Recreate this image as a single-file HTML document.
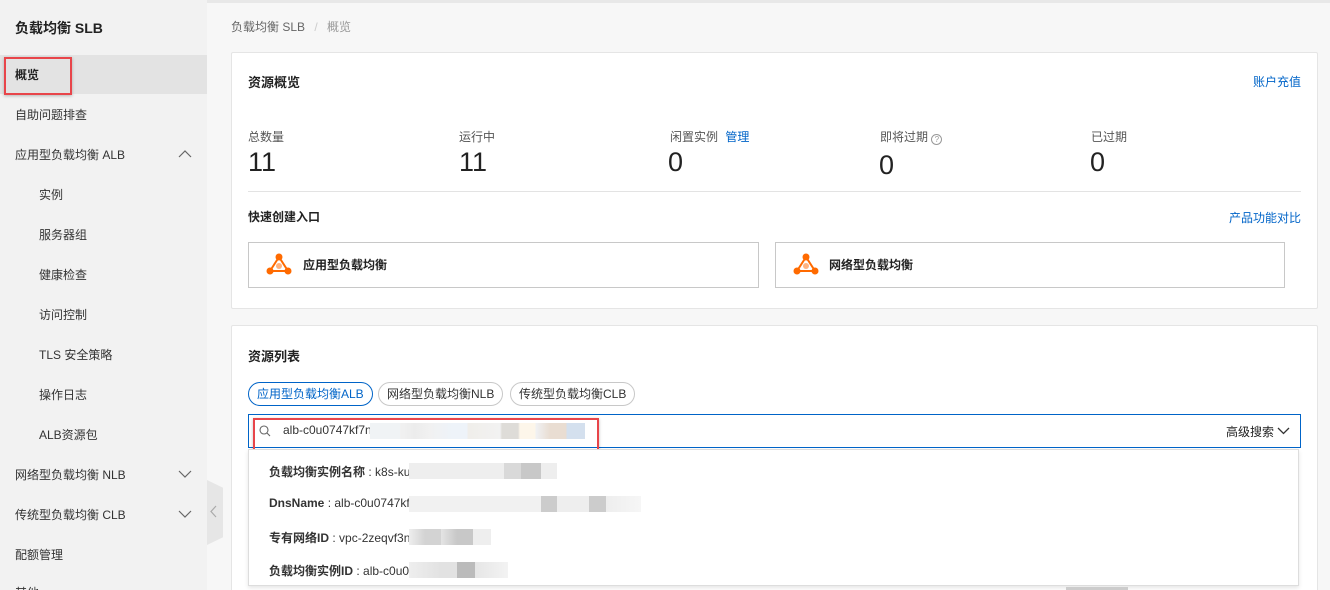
<!DOCTYPE html>
<html style="width:1330px;height:590px;overflow:hidden"><head><meta charset="utf-8"><style>
*{margin:0;padding:0;box-sizing:border-box}
body{width:1330px;height:590px;overflow:hidden;background:#f7f7f7;font-family:"Liberation Sans","Noto Sans CJK SC",sans-serif;color:#333;font-size:12px;position:relative}
.a{position:absolute;white-space:nowrap}
.side{position:absolute;left:0;top:0;width:207px;height:590px;background:#f2f2f2}
.blue{color:#0064c8}
.card{position:absolute;background:#fff;border:1px solid #e5e5e5;border-radius:2px}
.lbl{font-size:12px;color:#555}
.num{font-size:27px;color:#222}
.btn{position:absolute;border:1px solid #c8c8c8;background:#fff;height:46px;top:242px}
.tab{position:absolute;top:382px;height:24px;border:1px solid #c8c8c8;border-radius:12px;font-size:12px;line-height:22px;padding:0 8px;color:#333}
.pix{position:absolute;height:16px}
.it{font-size:12px;color:#333}
.it b{font-weight:bold}
</style></head><body>
<div class="a" style="left:0;top:0;width:1330px;height:3px;background:#e8e8e8"></div>
<div class="side">
<div class="a" style="left:15px;top:18px;font-size:14px;font-weight:bold;color:#222">负载均衡 SLB</div>
<div class="a" style="left:0;top:55px;width:207px;height:39px;background:#e3e3e3"></div>
<div class="a" style="left:4px;top:57px;width:68px;height:38px;border:2px solid #e8454a;box-shadow:0 1px 3px rgba(0,0,0,.25)"></div>
<div class="a" style="left:15px;top:66px;font-weight:bold;color:#222">概览</div>
<div class="a" style="left:15px;top:106px">自助问题排查</div>
<div class="a" style="left:15px;top:146px">应用型负载均衡 ALB</div>
<svg class="a" style="left:178px;top:150px" width="14" height="9"><path d="M1 7L7 1L13 7" fill="none" stroke="#666" stroke-width="1.2"/></svg>
<div class="a" style="left:39px;top:186px">实例</div>
<div class="a" style="left:39px;top:226px">服务器组</div>
<div class="a" style="left:39px;top:266px">健康检查</div>
<div class="a" style="left:39px;top:306px">访问控制</div>
<div class="a" style="left:39px;top:346px">TLS 安全策略</div>
<div class="a" style="left:39px;top:386px">操作日志</div>
<div class="a" style="left:39px;top:426px">ALB资源包</div>
<div class="a" style="left:15px;top:466px">网络型负载均衡 NLB</div>
<svg class="a" style="left:178px;top:470px" width="14" height="9"><path d="M1 1L7 7L13 1" fill="none" stroke="#666" stroke-width="1.2"/></svg>
<div class="a" style="left:15px;top:506px">传统型负载均衡 CLB</div>
<svg class="a" style="left:178px;top:510px" width="14" height="9"><path d="M1 1L7 7L13 1" fill="none" stroke="#666" stroke-width="1.2"/></svg>
<div class="a" style="left:15px;top:546px">配额管理</div>
<div class="a" style="left:15px;top:584px">其他</div>
</div>
<div class="a" style="left:207px;top:480px;width:16px;height:65px;background:#e6e6e6;clip-path:polygon(0 0,100% 12%,100% 88%,0 100%)"></div>
<svg class="a" style="left:210px;top:505px" width="8" height="13"><path d="M6 1L1 6.5L6 12" fill="none" stroke="#aaa" stroke-width="1.2"/></svg>
<div class="a" style="left:231px;top:18px;color:#666">负载均衡 SLB <span style="color:#ccc;margin:0 6px">/</span> <span style="color:#999">概览</span></div>

<div class="card" style="left:231px;top:52px;width:1087px;height:257px"></div>
<div class="a" style="left:248px;top:72px;font-size:13px;font-weight:bold;color:#222">资源概览</div>
<div class="a blue" style="left:1253px;top:73px">账户充值</div>
<div class="a lbl" style="left:248px;top:128px">总数量</div><div class="a num" style="left:248px;top:147px">11</div>
<div class="a lbl" style="left:459px;top:128px">运行中</div><div class="a num" style="left:459px;top:147px">11</div>
<div class="a lbl" style="left:670px;top:128px">闲置实例 <span class="blue" style="margin-left:4px">管理</span></div><div class="a num" style="left:668px;top:147px">0</div>
<div class="a lbl" style="left:880px;top:128px">即将过期 <span style="display:inline-block;width:11px;height:11px;border:1px solid #999;border-radius:50%;font-size:8px;line-height:9px;text-align:center;color:#999;vertical-align:-1px">?</span></div><div class="a num" style="left:879px;top:150px">0</div>
<div class="a lbl" style="left:1091px;top:128px">已过期</div><div class="a num" style="left:1090px;top:147px">0</div>
<div class="a" style="left:248px;top:191px;width:1053px;height:1px;background:#e3e3e3"></div>
<div class="a" style="left:248px;top:208px;font-weight:bold;color:#222">快速创建入口</div>
<div class="a blue" style="left:1229px;top:209px">产品功能对比</div>
<div class="btn" style="left:248px;width:511px"></div>
<div class="btn" style="left:775px;width:510px"></div>
<svg class="a" style="left:266px;top:252px" width="26" height="24"><path d="M13 5L4 19H22Z" fill="none" stroke="#ff6a00" stroke-width="2"/><circle cx="13" cy="5" r="3.5" fill="#ff6a00"/><circle cx="4" cy="19" r="3.5" fill="#ff6a00"/><circle cx="22" cy="19" r="3.5" fill="#ff6a00"/><circle cx="13" cy="14" r="3" fill="#ffb380"/></svg>
<div class="a" style="left:303px;top:256px;font-weight:bold;color:#222">应用型负载均衡</div>
<svg class="a" style="left:793px;top:252px" width="26" height="24"><path d="M13 5L4 19H22Z" fill="none" stroke="#ff6a00" stroke-width="2"/><circle cx="13" cy="5" r="3.5" fill="#ff6a00"/><circle cx="4" cy="19" r="3.5" fill="#ff6a00"/><circle cx="22" cy="19" r="3.5" fill="#ff6a00"/><circle cx="13" cy="14" r="3" fill="#ffb380"/></svg>
<div class="a" style="left:829px;top:256px;font-weight:bold;color:#222">网络型负载均衡</div>

<div class="card" style="left:231px;top:325px;width:1087px;height:270px"></div>
<div class="a" style="left:248px;top:346px;font-size:13px;font-weight:bold;color:#222">资源列表</div>
<div class="tab" style="left:248px;border-color:#0064c8;color:#0064c8">应用型负载均衡ALB</div>
<div class="tab" style="left:378px">网络型负载均衡NLB</div>
<div class="tab" style="left:510px">传统型负载均衡CLB</div>
<div class="a" style="left:248px;top:414px;width:1053px;height:34px;border:1px solid #0064c8;background:#fff"></div>
<svg class="a" style="left:259px;top:425px" width="12" height="12"><circle cx="5" cy="5" r="4" fill="none" stroke="#666" stroke-width="1.1"/><path d="M8 8L11 11" stroke="#666" stroke-width="1.1"/></svg>
<div class="a" style="left:283px;top:423px;color:#333">alb-c0u0747kf7n</div>
<div class="pix" style="left:370px;top:423px;width:215px;background:linear-gradient(90deg,#f0f3f5 0,#f0f3f5 30px,#f1f1f1 30px,#ececec 45px,#f1f1f1 60px,#eef3f9 82px,#eef3f9 97px,#f0eeea 98px,#f2f2f2 130px,#dedcd8 132px,#dedcd8 148px,#fdf6ea 150px,#fdf6ea 165px,#f0f1f3 166px,#e9ddd2 180px,#e9ddd2 196px,#d4e0ee 197px,#d4e0ee 215px)"></div>
<div class="a" style="left:253px;top:418px;width:346px;height:34px;border:2px solid #e8454a;box-shadow:0 1px 3px rgba(0,0,0,.25)"></div>
<div class="a" style="left:1226px;top:423px;color:#222">高级搜索</div>
<svg class="a" style="left:1277px;top:427px" width="13" height="8"><path d="M1 1L6.5 6.5L12 1" fill="none" stroke="#333" stroke-width="1.3"/></svg>
<div class="a" style="left:248px;top:449px;width:1051px;height:137px;background:#fff;border:1px solid #ddd;box-shadow:0 2px 4px rgba(0,0,0,.1)"></div>
<div class="a it" style="left:269px;top:463px"><b>负载均衡实例名称</b> : k8s-ku</div>
<div class="pix" style="left:409px;top:463px;width:148px;background:linear-gradient(90deg,#eee 0,#eee 95px,#d9d9d9 95px,#d9d9d9 112px,#c8c8c8 112px,#c8c8c8 132px,#eee 132px)"></div>
<div class="a it" style="left:269px;top:496px"><b>DnsName</b> : alb-c0u0747kf</div>
<div class="pix" style="left:409px;top:496px;width:232px;background:linear-gradient(90deg,#f1f1f1 0,#f1f1f1 132px,#ccc 132px,#ccc 148px,#eee 148px,#eee 180px,#ccc 180px,#ccc 197px,#eee 197px,#f6f6f6 232px)"></div>
<div class="a it" style="left:269px;top:529px"><b>专有网络ID</b> : vpc-2zeqvf3n</div>
<div class="pix" style="left:409px;top:529px;width:82px;background:linear-gradient(90deg,#eee 0,#d3d3d3 16px,#d3d3d3 32px,#e4e4e4 32px,#c8c8c8 48px,#c8c8c8 64px,#eee 64px)"></div>
<div class="a it" style="left:269px;top:562px"><b>负载均衡实例ID</b> : alb-c0u0</div>
<div class="pix" style="left:409px;top:562px;width:99px;background:linear-gradient(90deg,#eee 0,#e2e2e2 32px,#e2e2e2 48px,#bbb 48px,#bbb 66px,#e6e6e6 66px,#f3f3f3 99px)"></div>
<div class="a" style="left:1066px;top:587px;width:62px;height:3px;background:#ccc"></div>
</body></html>
